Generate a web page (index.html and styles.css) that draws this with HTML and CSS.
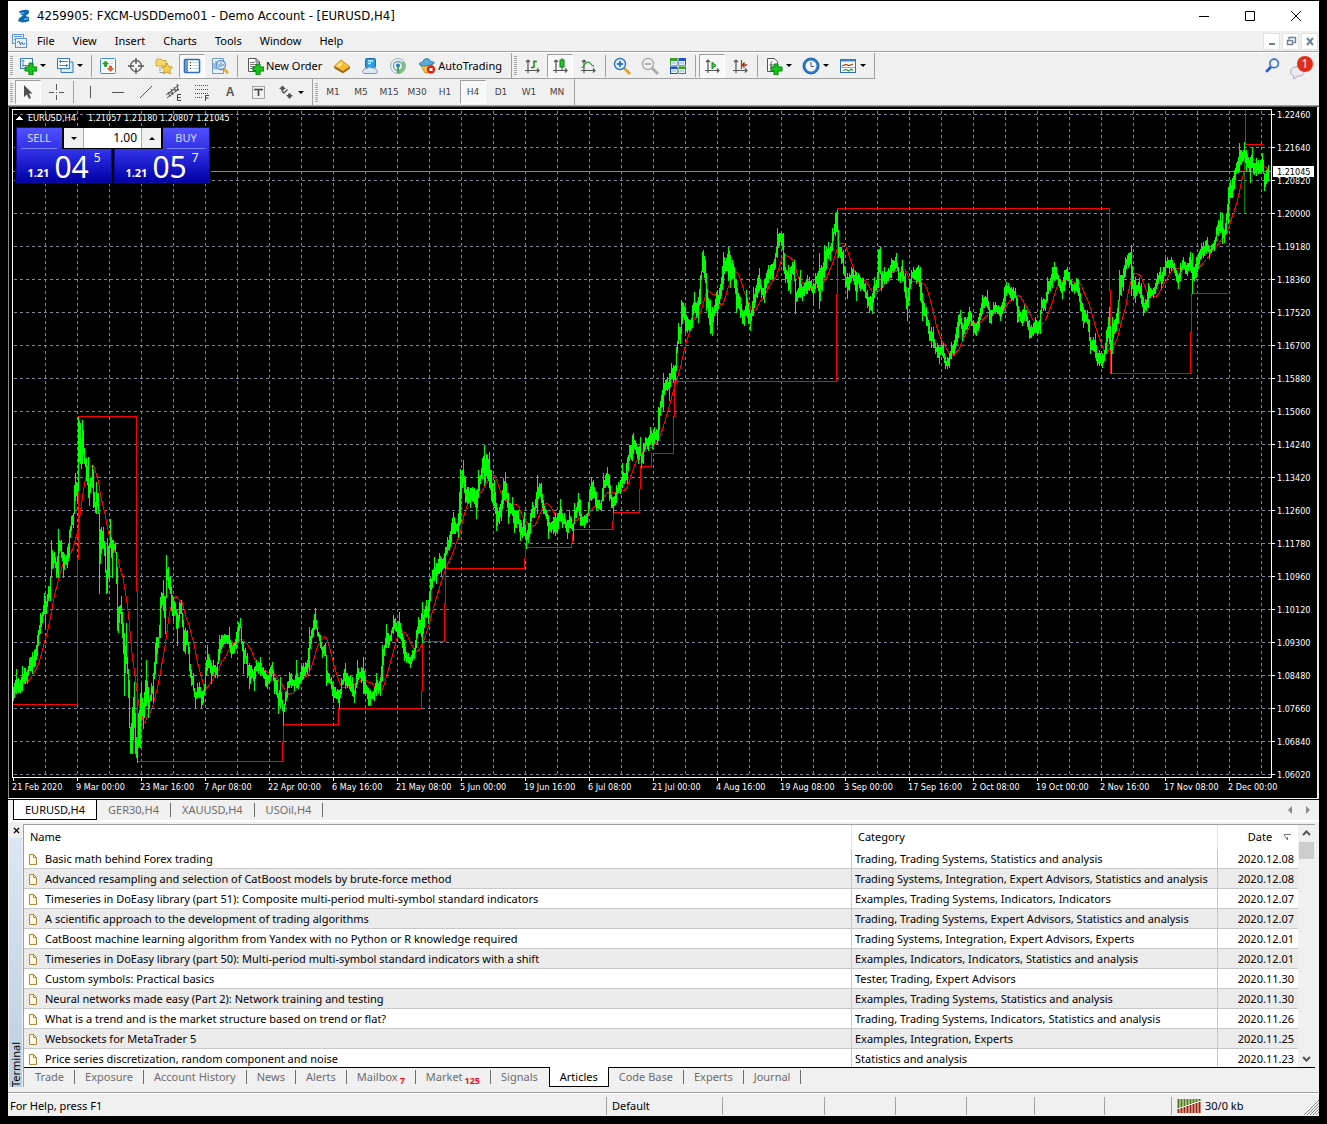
FILE: index.html
```html
<!DOCTYPE html>
<html lang="en">
<head>
<meta charset="utf-8">
<meta name="viewport" content="width=device-width, initial-scale=1">
<title>4259905: FXCM-USDDemo01 - Demo Account - [EURUSD,H4]</title>
<link rel="stylesheet" href="styles.css">
</head>
<body>
<div class="window">
  <header class="titlebar">
    <svg class="app-logo" viewBox="0 0 14 14"><path d="M2 2.500Q6 0 11 1Q13.500 3 10.500 5.500L8.500 7L12 8V12Q7 14.500 2 12.500Q0 11 3 8.500L6 6.500L3 5Z" fill="#0f6ab4"/><path d="M3 4.500L7 4M7 10.500L11 9.500" stroke="#9fd0ee" stroke-width="1"/></svg>
    <h1 class="title">4259905: FXCM-USDDemo01 - Demo Account - [EURUSD,H4]</h1>
    <div class="window-controls">
      <button aria-label="Minimize"><svg viewBox="0 0 12 12"><path d="M1 6.500H11" stroke="#000"/></svg></button>
      <button aria-label="Maximize"><svg viewBox="0 0 12 12"><path d="M1.500 1.500H10.500V10.500H1.500Z" fill="none" stroke="#000"/></svg></button>
      <button aria-label="Close"><svg viewBox="0 0 12 12"><path d="M1 1L11 11M11 1L1 11" stroke="#000"/></svg></button>
    </div>
  </header>

  <nav class="menubar" aria-label="Main menu">
    <svg class="menu-icon" viewBox="0 0 16 16"><rect x=".5" y="1.500" width="11" height="9" fill="#eaf3fc" stroke="#5b94d6"/><path d="M2 3.500H10M2 7L4 5.500L6 7" fill="none" stroke="#5b94d6"/><rect x="3.500" y="5.500" width="11" height="9" fill="#eaf3fc" stroke="#5b94d6"/><path d="M5 10L7 8L8.500 12L10 9L11.500 12L13 10" fill="none" stroke="#3a78c4"/></svg>
    <button>File</button><button>View</button><button>Insert</button><button>Charts</button><button>Tools</button><button>Window</button><button>Help</button>
    <div class="mdi-controls">
      <button aria-label="Minimize chart"><svg viewBox="0 0 12 12"><path d="M3 9H9" stroke="#6f8193" stroke-width="2"/></svg></button>
      <button aria-label="Restore chart"><svg viewBox="0 0 12 12"><path d="M4 4.500V2.500H10.500V7.500H8.500M4 2.500H11" fill="none" stroke="#6f8193" stroke-width="1.500"/><rect x="2.500" y="5.500" width="5" height="4" fill="#fff" stroke="#6f8193" stroke-width="1.500"/></svg></button>
      <button aria-label="Close chart"><svg viewBox="0 0 12 12"><path d="M3 3L9 10M9 3L3 10" stroke="#6f8193" stroke-width="2"/></svg></button>
    </div>
  </nav>

  <div class="toolbars">
    <div class="toolbar-row">
      <div class="tool-group">
        <span class="grip"></span>
        <button class="tool drop" aria-label="New chart"><svg viewBox="0 0 18 18"><rect x="1.500" y="1.500" width="12" height="10" fill="#f5faff" stroke="#3d79b8"/><path d="M4 3V10M2.500 4.500L4 3L5.500 4.500M3 8.500H11" fill="none" stroke="#4f86bf"/><path d="M10 6H14V10H18V14H14V18H10V14H6V10H10Z" fill="#16c51c" stroke="#087d0c"/></svg><i class="caret"></i></button>
        <button class="tool drop" aria-label="Profiles"><svg viewBox="0 0 18 18"><path d="M5 5H17V15.500H5Z" fill="#dcebfb" stroke="#3d79b8"/><rect x="1.500" y="1.500" width="12" height="10" fill="#f5faff" stroke="#3d79b8"/><path d="M3 4.500H12M3 8.500H12M5 3L3.500 4.500L5 6M10 7L11.500 8.500L10 10" fill="none" stroke="#4f86bf"/></svg><i class="caret"></i></button>
        <span class="sep"></span>
        <button class="tool" aria-label="Market Watch"><svg viewBox="0 0 18 18"><rect x="1.500" y="1.500" width="15" height="15" rx="1" fill="#fff" stroke="#3f8fd6"/><path d="M6.500 4L9.500 7H7.500V9.500H5.500V7H3.500Z" fill="#18b21c" stroke="#0b7a0e" stroke-width=".6"/><path d="M11.500 14.500L14.500 11.500H12.500V9H10.500V11.500H8.500Z" fill="#f1602b" stroke="#b83510" stroke-width=".6"/><path d="M11 4.500H14M11 6.500H14M3.500 12.500H6" stroke="#c4d8ec"/></svg></button>
        <button class="tool" aria-label="Data Window"><svg viewBox="0 0 18 18"><circle cx="9" cy="9" r="5.500" fill="none" stroke="#555" stroke-width="1.300"/><path d="M9 1V7M9 11V17M1 9H7M11 9H17" stroke="#555" stroke-width="1.300"/></svg></button>
        <button class="tool" aria-label="Navigator"><svg viewBox="0 0 18 18"><path d="M1 3L2 2H6L7 3.500H11V9H1Z" fill="#f7d86a" stroke="#c29a24" stroke-width=".8"/><path d="M5 11V15.500H9" fill="none" stroke="#555" stroke-dasharray="1 1"/><path d="M12 6L13.700 9.600L17.500 10.200L14.700 12.900L15.500 17L12 15L8.500 17L9.300 12.900L6.500 10.200L10.300 9.600Z" fill="#fbd045" stroke="#b98a18" stroke-width=".8"/></svg></button>
        <button class="tool pressed" aria-label="Terminal"><svg viewBox="0 0 18 18"><rect x="1.500" y="2.500" width="15" height="13" rx="1" fill="#fff" stroke="#2c6fb5" stroke-width="1.600"/><rect x="2" y="3" width="3" height="12" fill="#5c9ad8"/><path d="M7.500 5V14" stroke="#222" stroke-dasharray="1 2"/><path d="M8.500 5.500H15M8.500 8.500H15M8.500 11.500H15" stroke="#c2dcf6"/></svg></button>
        <button class="tool" aria-label="Strategy Tester"><svg viewBox="0 0 18 18"><path d="M1.500 1.500H12.500V16.500H1.500Z" fill="#eaf3fc" stroke="#6c9ccb"/><path d="M3 12V6M5 13V4M11 5V3" stroke="#4f86bf"/><circle cx="10" cy="8" r="4.500" fill="#d4e8fa" fill-opacity=".9" stroke="#5d90bf" stroke-width="1.300"/><path d="M8 10V7M10 10V5.500M12 9V7" stroke="#4f86bf"/><path d="M13 12L17 16" stroke="#e0ac2c" stroke-width="2.600"/></svg></button>
        <span class="sep"></span>
        <button class="tool text-tool"><svg viewBox="0 0 18 18"><path d="M2.500 1.500H10L13.500 5V14.500H2.500Z" fill="#fff" stroke="#555"/><path d="M10 1.500V5H13.500" fill="none" stroke="#555"/><path d="M4 5.500H9M4 7.500H11M4 9.500H9M4 11.500H7" stroke="#777"/><path d="M10 7H14V10H18V14H14V18H10V14H7V10H10Z" fill="#16c51c" stroke="#087d0c"/></svg>New Order</button>
        <button class="tool" aria-label="MetaEditor"><svg viewBox="0 0 18 18"><path d="M1.500 9L8 3L16.500 9.500V11.500L10 16L1.500 11Z" fill="#a56a0c" stroke="#8d5a08" stroke-width=".7"/><path d="M1.500 9L8 3L16.500 9.500L10 14Z" fill="#f3bd3a"/><path d="M3.500 9L8 5L10 6.500L5.500 10.500Z" fill="#fde38f"/></svg></button>
        <button class="tool" aria-label="Virtual Hosting"><svg viewBox="0 0 18 18"><rect x="4.500" y="1.500" width="10" height="9" rx="1" fill="#2b9be3" stroke="#1469ad"/><path d="M7 4H12M7 6.500H10" stroke="#d7f0ff" stroke-width="1.500"/><path d="M3 16.500Q.5 15 2.500 12.500Q4 10.500 6 11.500Q8 8.500 11 11Q15 10 15.500 13Q17.500 15 15.500 16.500Z" fill="#dce6f1" stroke="#8299b3"/></svg></button>
        <button class="tool" aria-label="Signals"><svg viewBox="0 0 18 18"><circle cx="9" cy="9" r="7.500" fill="#e9f2ee" stroke="#98b4c6"/><circle cx="9" cy="9" r="4.500" fill="none" stroke="#6f9fc0" stroke-width="1.300"/><path d="M9 4.500A4.500 4.500 0 0 1 9 13.500V17A8 8 0 0 0 15.500 5Z" fill="#7fc184"/><circle cx="9" cy="8.500" r="2" fill="#2878c8"/><path d="M9 9V16" stroke="#2c9b39" stroke-width="1.600"/></svg></button>
        <button class="tool text-tool"><svg viewBox="0 0 18 18"><path d="M2.500 8L15 7L10 16H7Z" fill="#f3c342" stroke="#b98a18" stroke-width=".8"/><path d="M1 7Q2 5 5 5Q5 1.500 9 1.500Q12 1.500 12.500 4.500Q16 4 16.500 6Q12 9 7 9Q2 9 1 7Z" fill="#58aadb" stroke="#2773a8" stroke-width=".8"/><circle cx="13" cy="12.500" r="4.200" fill="#dc2314"/><rect x="11.500" y="11" width="3" height="3" fill="#fff"/></svg>AutoTrading</button>
      </div>
      <div class="tool-group">
        <span class="grip"></span>
        <button class="tool" aria-label="Bar chart"><svg viewBox="0 0 18 18"><path d="M5 3V16M2 13.500H16M3 5L5 3L7 5M14 11.500L16 13.500L14 15.500" fill="none" stroke="#555" stroke-width="1.200"/><path d="M8 10.500H11M11 3.500V11M11 4.500H14" fill="none" stroke="#138a1b" stroke-width="1.500"/></svg></button>
        <button class="tool pressed" aria-label="Candlesticks"><svg viewBox="0 0 18 18"><path d="M5 3V16M2 13.500H16M3 5L5 3L7 5M14 11.500L16 13.500L14 15.500" fill="none" stroke="#555" stroke-width="1.200"/><path d="M11 1V13" stroke="#0d7614"/><rect x="9" y="3" width="4" height="7" fill="#21cc2b" stroke="#0d7614"/></svg></button>
        <button class="tool" aria-label="Line chart"><svg viewBox="0 0 18 18"><path d="M5 3V16M2 13.500H16M3 5L5 3L7 5M14 11.500L16 13.500L14 15.500" fill="none" stroke="#555" stroke-width="1.200"/><path d="M3 11Q8 3 11 6Q13 9 15 9" fill="none" stroke="#2d9b35" stroke-width="1.300"/></svg></button>
        <span class="sep"></span>
        <button class="tool" aria-label="Zoom in"><svg viewBox="0 0 18 18"><path d="M11 11L17 17" stroke="#d9a528" stroke-width="2.800"/><circle cx="7" cy="7" r="5.500" fill="#dceefc" stroke="#2f76b8" stroke-width="1.400"/><path d="M4 7H10M7 4V10" stroke="#2f76b8" stroke-width="1.800"/></svg></button>
        <button class="tool" aria-label="Zoom out"><svg viewBox="0 0 18 18"><path d="M11 11L17 17" stroke="#aaa" stroke-width="2.800"/><circle cx="7" cy="7" r="5.500" fill="#f2f2f2" stroke="#aaa" stroke-width="1.400"/><path d="M4 7H10" stroke="#aaa" stroke-width="1.800"/></svg></button>
        <button class="tool" aria-label="Tile windows"><svg viewBox="0 0 18 18"><path d="M1 1H9V9H1ZM9 9H17V17H9Z" fill="#3a9b25"/><path d="M9 1H17V9H9ZM1 9H9V17H1Z" fill="#2450c4"/><path d="M2 4H8V8H2ZM10 4H16V8H10ZM2 12H8V16H2ZM10 12H16V16H10Z" fill="#e6f0fb"/><path d="M2.500 6H7M10.500 6H15M2.500 14H7M10.500 14H15" stroke="#8db3d8"/><path d="M1 9H17M9 1V17" stroke="#fff" stroke-width=".8"/></svg></button>
        <span class="sep"></span>
        <button class="tool pressed" aria-label="Auto scroll"><svg viewBox="0 0 18 18"><path d="M5 3V16M2 13.500H16M3 5L5 3L7 5M14 11.500L16 13.500L14 15.500" fill="none" stroke="#555" stroke-width="1.200"/><path d="M9 5L13 8.500L9 12Z" fill="#3cc544" stroke="#138a1b"/></svg></button>
        <button class="tool" aria-label="Chart shift"><svg viewBox="0 0 18 18"><path d="M5 3V16M2 13.500H16M3 5L5 3L7 5M14 11.500L16 13.500L14 15.500" fill="none" stroke="#555" stroke-width="1.200"/><path d="M10.500 3V12" stroke="#555" stroke-width="1.200"/><path d="M11 8H16M13.500 5.500L11.500 8L13.500 10.500" fill="none" stroke="#a83413" stroke-width="1.500"/></svg></button>
        <span class="sep"></span>
        <button class="tool drop" aria-label="Indicators"><svg viewBox="0 0 18 18"><path d="M2.500 1.500H9L12.500 4.500V14.500H2.500Z" fill="#fff" stroke="#555"/><path d="M7.500 4.500Q6 4.500 6 6.500V12M4.500 8H8" fill="none" stroke="#555"/><path d="M9 7H13V10H17V14H13V18H9V14H6V10H9Z" fill="#16c51c" stroke="#087d0c"/></svg><i class="caret"></i></button>
        <button class="tool drop" aria-label="Periods"><svg viewBox="0 0 18 18"><circle cx="9" cy="9" r="6.800" fill="#f4f8fc" stroke="#2a78cc" stroke-width="2.600"/><circle cx="9" cy="9" r="8" fill="none" stroke="#174f94" stroke-width=".8"/><path d="M9 5V9.500H12" fill="none" stroke="#555"/></svg><i class="caret"></i></button>
        <button class="tool drop" aria-label="Templates"><svg viewBox="0 0 18 18"><rect x="1.500" y="2.500" width="15" height="13" fill="#fff" stroke="#2c6fb5"/><rect x="1.500" y="2.500" width="15" height="2" fill="#3d82cc"/><path d="M3 9L7 7.500L10 8.500L14 7" fill="none" stroke="#a83413" stroke-width="1.200"/><path d="M2 10.500H16" stroke="#8db3d8"/><path d="M4 13.500L7 12.500L10 14L12 12L14 13.500" fill="none" stroke="#2d9b35" stroke-width="1.200"/></svg><i class="caret"></i></button>
      </div>
    </div>
    <div class="toolbar-row toolbar-row-small">
      <div class="tool-group">
        <span class="grip"></span>
        <button class="tool pressed" aria-label="Cursor"><svg viewBox="0 0 18 18"><path d="M5 2V14L8 11.500L10 16L12 15L10 10.500H13.500Z" fill="#505050"/></svg></button>
        <button class="tool" aria-label="Crosshair"><svg viewBox="0 0 18 18"><path d="M9.500 1V7M9.500 12V17M2 9.500H7M12 9.500H17" stroke="#555"/><path d="M9 9H10V10H9Z" fill="#555"/></svg></button>
        <span class="sep"></span>
        <button class="tool" aria-label="Vertical line"><svg viewBox="0 0 18 18"><path d="M9.500 3V15" stroke="#555"/></svg></button>
        <button class="tool" aria-label="Horizontal line"><svg viewBox="0 0 18 18"><path d="M3 9.500H15" stroke="#555"/></svg></button>
        <button class="tool" aria-label="Trendline"><svg viewBox="0 0 18 18"><path d="M3 15L15 3" stroke="#555"/></svg></button>
        <button class="tool" aria-label="Equidistant channel"><svg viewBox="0 0 18 18"><path d="M1 12L14 2M2 15L14 6M3 9L5 14M6 6L8 12M9 4L11 9M12 1L13 8M3 10H8M7 7H13" stroke="#555"/><path d="M16 11.500H12.500V17.500H16M12.500 14.500H15.500" fill="none" stroke="#444"/></svg></button>
        <button class="tool" aria-label="Fibonacci retracement"><svg viewBox="0 0 18 18"><path d="M2 2.500H16M2 6.500H16M2 10.500H16M2 14.500H10" stroke="#555" stroke-dasharray="1 1"/><path d="M16 12.500H12.500V18M12.500 15H15.500" fill="none" stroke="#444"/></svg></button>
        <button class="tool glyph" aria-label="Text">A</button>
        <button class="tool" aria-label="Text label"><svg viewBox="0 0 18 18"><path d="M3.500 3.500H15.500V15.500H3.500Z" fill="none" stroke="#555" stroke-dasharray="1 1"/><path d="M6 7.500V6.500H13V7.500M9.500 6V13" fill="none" stroke="#444" stroke-width="1.600"/></svg></button>
        <button class="tool drop" aria-label="Arrows"><svg viewBox="0 0 18 18"><path d="M2 6L5.500 2.500L9 6H7V7.500H4V6Z" fill="#555"/><path d="M9 12L12.500 16L16 12H14V10.500H11V12ZM4.500 8.500L7 11L11 7L10 6L7 9L5.500 7.500Z" fill="#555"/></svg><i class="caret"></i></button>
      </div>
      <div class="tool-group periods">
        <span class="grip"></span>
        <button class="tool">M1</button><button class="tool">M5</button><button class="tool">M15</button><button class="tool">M30</button><button class="tool">H1</button><button class="tool pressed">H4</button><button class="tool">D1</button><button class="tool">W1</button><button class="tool">MN</button>
      </div>
    </div>
    <div class="toolbar-end">
      <button class="plain" aria-label="Search"><svg viewBox="0 0 16 16"><path d="M6.500 9.500L2 14" stroke="#2b59c3" stroke-width="2.600"/><circle cx="9.500" cy="6" r="4" fill="#eef5ff" stroke="#3a6bd0" stroke-width="1.500"/></svg></button>
      <button class="plain chat" aria-label="Messages"><svg viewBox="0 0 18 18"><path d="M2 8Q3 4 9 4Q16 4 16 9Q16 14 9 14L5 17V13.500Q1 12 2 8Z" fill="#eceaf0" stroke="#a6a3ad"/></svg><span class="badge">1</span></button>
    </div>
  </div>

  <main class="chart-panel">
    <svg class="chart" viewBox="8 107 1311 691" role="img" aria-label="EURUSD H4 price chart">
      <path class="frame" d="M1272 109.500H12.500V777.500H1272M1271.500 109V778"/>
      <g id="grid" class="grid"></g>
      <path class="bid" d="M13 171.500H1271"/>
      <path class="marker" d="M1245.500 110V144M1244.500 144V213"/>
      <path id="average" class="average"/>
      <path class="levels" d="M13 704.500H77.500V560L78.500 559V416.500H136.500V590L137.500 591V761.500H282.500V742L283.500 741V724.500H338.500V708.500H421.500L422.500 674V641.500H444.500V604L445.500 603V568.500H524.500L525.500 547.500H571.500L573.500 529.500H612.500L613.500 512.500H639.500L640.500 466.500H651.500V453.500H673.500V417L674.500 416V381.500H836.500V295L837.500 294V208.500H1109.500V290L1110.500 291V373.500H1190.500V333L1191.500 332V293.500H1227M1245 144.500H1263"/>
      <path id="prices" class="prices"/>
      <g id="labels" class="labels"></g>
      <path d="M16 120H23L19.500 116Z" fill="#fff"/>
      <rect x="1273" y="166" width="41" height="11" fill="#fff"/>
      <text class="current" x="1277" y="175">1.21045</text>
      <text class="labels" x="28" y="121">EURUSD,H4</text>
      <text class="labels" x="88" y="121">1.21057 1.21180 1.20807 1.21045</text>
    </svg>
    <div class="one-click">
      <button class="trade"><span class="side">SELL</span><span class="quote"><b>1.21</b><span class="pips">04</span><sup>5</sup></span></button>
      <button class="trade buy"><span class="side">BUY</span><span class="quote"><b>1.21</b><span class="pips">05</span><sup>7</sup></span></button>
      <div class="volume">
        <button aria-label="Decrease volume"><i class="caret"></i></button>
        <input type="text" value="1.00" aria-label="Volume">
        <button aria-label="Increase volume"><i class="caret up"></i></button>
      </div>
    </div>
  </main>

  <div class="chart-tabs" role="tablist">
    <button class="tab active">EURUSD,H4</button><button class="tab">GER30,H4</button><button class="tab">XAUUSD,H4</button><button class="tab">USOil,H4</button>
    <div class="tab-scroll"><button class="plain" aria-label="Scroll left"><i class="tri left"></i></button><button class="plain" aria-label="Scroll right"><i class="tri right"></i></button></div>
  </div>

  <section class="terminal">
    <div class="terminal-side">
      <button class="plain" aria-label="Close terminal"><svg viewBox="0 0 8 8"><path d="M1 1L7 7M7 1L1 7" stroke="#000" stroke-width="1.600"/></svg></button>
      <div class="terminal-name"><span>Terminal</span></div>
    </div>
    <div class="terminal-body">
      <div class="list">
        <table class="articles">
          <colgroup><col><col class="col-category"><col class="col-date"></colgroup>
          <thead><tr><th>Name</th><th>Category</th><th class="date">Date <svg class="sort" viewBox="0 0 9 8"><path d="M1 1.500H8M1 1.500L4.500 7V4" fill="none" stroke="#777"/></svg></th></tr></thead>
          <tbody id="articles">
            <tr><td>Basic math behind Forex trading</td><td>Trading, Trading Systems, Statistics and analysis</td><td>2020.12.08</td></tr>
            <tr><td>Advanced resampling and selection of CatBoost models by brute-force method</td><td>Trading Systems, Integration, Expert Advisors, Statistics and analysis</td><td>2020.12.08</td></tr>
            <tr><td>Timeseries in DoEasy library (part 51): Composite multi-period multi-symbol standard indicators</td><td>Examples, Trading Systems, Indicators, Indicators</td><td>2020.12.07</td></tr>
            <tr><td>A scientific approach to the development of trading algorithms</td><td>Trading, Trading Systems, Expert Advisors, Statistics and analysis</td><td>2020.12.07</td></tr>
            <tr><td>CatBoost machine learning algorithm from Yandex with no Python or R knowledge required</td><td>Trading Systems, Integration, Expert Advisors, Experts</td><td>2020.12.01</td></tr>
            <tr><td>Timeseries in DoEasy library (part 50): Multi-period multi-symbol standard indicators with a shift</td><td>Examples, Indicators, Indicators, Statistics and analysis</td><td>2020.12.01</td></tr>
            <tr><td>Custom symbols: Practical basics</td><td>Tester, Trading, Expert Advisors</td><td>2020.11.30</td></tr>
            <tr><td>Neural networks made easy (Part 2): Network training and testing</td><td>Examples, Trading Systems, Statistics and analysis</td><td>2020.11.30</td></tr>
            <tr><td>What is a trend and is the market structure based on trend or flat?</td><td>Trading, Trading Systems, Indicators, Statistics and analysis</td><td>2020.11.26</td></tr>
            <tr><td>Websockets for MetaTrader 5</td><td>Examples, Integration, Experts</td><td>2020.11.25</td></tr>
            <tr><td>Price series discretization, random component and noise</td><td>Statistics and analysis</td><td>2020.11.23</td></tr>
          </tbody>
        </table>
        <div class="scrollbar">
          <button class="plain" aria-label="Scroll up"><svg viewBox="0 0 9 9"><path d="M1 6L4.500 2.500L8 6" fill="none" stroke="#555" stroke-width="2"/></svg></button>
          <div class="thumb"></div>
          <button class="plain" aria-label="Scroll down"><svg viewBox="0 0 9 9"><path d="M1 3L4.500 6.500L8 3" fill="none" stroke="#555" stroke-width="2"/></svg></button>
        </div>
      </div>
      <div class="bottom-tabs" role="tablist">
        <button class="tab">Trade</button><button class="tab">Exposure</button><button class="tab">Account History</button><button class="tab">News</button><button class="tab">Alerts</button><button class="tab">Mailbox<sub>7</sub></button><button class="tab">Market<sub>125</sub></button><button class="tab before">Signals</button><button class="tab active">Articles</button><button class="tab">Code Base</button><button class="tab">Experts</button><button class="tab">Journal</button>
      </div>
    </div>
  </section>

  <footer class="statusbar">
    <span>For Help, press F1</span><span>Default</span><span></span><span></span><span></span><span></span><span></span><span></span>
    <span class="traffic"><svg viewBox="0 0 24 14"><path d="M1.500 0V9M4.500 0V8M7.500 0V7M10.500 0V6M13.500 0V5M16.500 0V4M19.500 0V3M22.500 0V2" stroke="#4c7a12" stroke-width="2"/><path d="M1.500 10V14M4.500 9V14M7.500 8V14M10.500 7V14M13.500 6V14M16.500 5V14M19.500 4V14M22.500 3V14" stroke="#a0220c" stroke-width="2"/></svg>30/0 kb
    <svg class="resize" viewBox="0 0 16 16"><path d="M1 16L16 1M4 16L16 4M7 16L16 7M10 16L16 10M13 16L16 13" stroke="#8a8a8a"/></svg></span>
  </footer>
</div>
<script src="chart.js"></script>
</body>
</html>
```
FILE: styles.css
```css
* { box-sizing: border-box; }

body {
  margin: 0;
  padding: 1px 8px 8px;
  min-height: 100vh;
  background: #000;
  color: #000;
  font: 11px/16px "Noto Sans", "Open Sans", sans-serif;
}

button, input { margin: 0; padding: 0; border: 0; background: none; color: inherit; font: inherit; }
svg { display: block; }
.window { background: #f0f0f0; }
.plain { display: flex; align-items: center; justify-content: center; }

/* Title and menu */
.titlebar { display: flex; align-items: center; height: 30px; padding-left: 9px; background: #fff; }
.app-logo { width: 14px; height: 14px; }
.title { margin: 0 auto 0 6px; font: 13px/20px "DejaVu Sans Condensed", "DejaVu Sans", sans-serif; }
.window-controls { display: flex; }
.window-controls button { display: grid; place-items: center; width: 46px; height: 30px; }
.window-controls svg { width: 12px; height: 12px; }

.menubar { display: flex; align-items: center; height: 21px; padding-left: 4px; border-bottom: 1px solid #a0a0a0; }
.menu-icon { width: 16px; height: 16px; }
.menubar > button { padding: 0 9px; }
.mdi-controls { display: flex; gap: 2px; margin-left: auto; padding-right: 1px; }
.mdi-controls button { display: grid; place-items: center; width: 17px; height: 17px; border: 1px solid #e2e2e2; background: #fff; }
.mdi-controls svg { width: 12px; height: 12px; }

/* Toolbars */
.toolbars { display: grid; grid-template-columns: 1fr auto; border-top: 1px solid #fff; border-bottom: 1px solid #a0a0a0; }
.toolbar-row { display: flex; grid-column: 1; height: 26px; }
.tool-group { display: flex; align-items: center; padding-right: 3px; border-right: 1px solid #a0a0a0; border-bottom: 1px solid #a0a0a0; }
.toolbar-row-small .tool-group { border-bottom: 0; }
.grip { width: 3px; height: 19px; margin: 0 1px 0 2px; background: repeating-linear-gradient(#a6a6a6 0 1px, transparent 1px 2px); }
.tool { display: flex; flex: none; align-items: center; justify-content: center; width: 28px; height: 24px; }
.tool svg { flex: none; width: 18px; height: 18px; }
.drop { justify-content: flex-start; gap: 3px; width: 37px; padding-left: 5px; }
.text-tool { gap: 2px; width: auto; padding: 0 6px; }
.pressed { width: 26px; margin: 0 1px; border: 1px solid; border-color: #a0a0a0 #fff #fff #a0a0a0; background: #f8f8f8; }
.sep { width: 6px; height: 22px; background: linear-gradient(#a0a0a0, #a0a0a0) 3px 0 / 1px 100% no-repeat; }
.caret { border: 3px solid transparent; border-top-color: #000; border-bottom: 0; }
.caret.up { border-top: 0; border-bottom: 3px solid #000; }
.glyph { color: #555; font: bold 12px/16px "Liberation Sans", sans-serif; }
.periods .tool { color: #444; font: 9px/16px "DejaVu Sans", sans-serif; }
.toolbar-end { display: flex; grid-column: 2; grid-row: 1 / 3; align-items: flex-start; gap: 8px; padding: 4px 6px 0 0; }
.toolbar-end svg { width: 17px; height: 17px; }
.chat { position: relative; width: 24px; height: 24px; padding-top: 4px; justify-content: flex-start; }
.badge { position: absolute; top: -1px; right: 0; width: 16px; height: 16px; border-radius: 8px; background: #df2f1b; color: #fff; font-size: 12px; text-align: center; }

/* Price chart */
.chart-panel { position: relative; border-top: 1px solid #5a5a5a; border-bottom: 1px solid #fff; background: #000; box-shadow: inset 1px 0 #8c8c8c, inset -2px 0 #e8e8e8; }
.chart { width: 100%; height: auto; }
.chart path { shape-rendering: crispEdges; }
.frame { fill: none; stroke: #fff; }
.grid { fill: none; stroke: #778899; stroke-dasharray: 3 3; }
.bid { stroke: #778899; }
.marker { fill: none; stroke: #008000; }
.average, .levels { fill: none; stroke: #f00; }
.prices { fill: none; stroke: #0f0; }
.labels, .current { fill: #fff; font: 9px "DejaVu Sans Condensed", "DejaVu Sans", sans-serif; }
.current { fill: #000; }
.labels path { fill: none; stroke: #fff; }

.one-click { position: absolute; top: 20px; left: 8px; display: flex; gap: 2px; outline: 1px solid #000; background: #000; }
.trade { display: flex; flex-direction: column; justify-content: space-between; width: 96px; height: 56px; padding: 1px 4px; border: 1px solid #0a0aa8; background: linear-gradient(#5050ff, #2a2ae0 50%, #0000a4); color: #fff; }
.side { width: 36px; height: 20px; border-bottom: 1px solid #7e7eff; color: #d8dcff; line-height: 18px; text-align: center; }
.buy .side { align-self: flex-end; width: 38px; }
.quote { display: flex; align-items: flex-end; align-self: center; height: 30px; gap: 5px; line-height: 17px; }
.pips { font-size: 30px; line-height: 29px; }
.quote sup { align-self: flex-start; font-size: 12px; line-height: 14px; vertical-align: baseline; }
.volume { position: absolute; top: 0; left: 46px; display: flex; width: 101px; height: 22px; padding: 1px 2px; background: #000; }
.volume button { display: grid; place-items: center; flex: none; width: 19px; background: #f0f0f0; }
.volume input { width: 59px; padding-right: 4px; border: solid #aaa; border-width: 0 1px; background: #fff; font-size: 12px; text-align: right; }

/* Tab strips */
.tab { height: 14px; padding: 0 10px; border-right: 1px solid #6d6d6d; color: #6d6d6d; line-height: 14px; white-space: nowrap; }
.tab.active { height: 20px; border: 1px solid #000; border-top: 0; background: #fff; color: #000; line-height: 18px; }
.tab sub { margin-left: 2px; color: #e81123; font: bold 9px/8px "Noto Sans", sans-serif; }
.chart-tabs { display: flex; align-items: center; height: 23px; padding-left: 5px; border-top: 1px solid #000; border-bottom: 2px solid #fff; }
.chart-tabs .tab { padding: 0 11px; }
.tab-scroll { display: flex; gap: 14px; margin-left: auto; padding-right: 9px; }
.tri { border: 4px solid transparent; }
.tri.left { border-right-color: #888; border-left: 0; }
.tri.right { border-left-color: #888; border-right: 0; }

/* Terminal */
.terminal { display: flex; padding: 2px 4px 5px 1px; border-bottom: 1px solid #a0a0a0; }
.terminal-side { display: flex; flex: none; flex-direction: column; width: 14px; }
.terminal-side button { height: 12px; }
.terminal-side svg { width: 7px; height: 7px; }
.terminal-name { flex: 1; display: flex; align-items: flex-end; margin: 2px 1px 0 0; background: linear-gradient(#dbe7f4, #bccfe0); }
.terminal-name span { writing-mode: vertical-rl; transform: rotate(180deg); width: 13px; line-height: 13px; }
.terminal-body { flex: 1; min-width: 0; border-top: 1px solid #a0a0a0; border-left: 1px solid #a0a0a0; }
.list { display: flex; height: 242px; overflow: hidden; background: #fff; }
.articles { flex: 1; width: 100%; height: max-content; border-collapse: separate; border-spacing: 0; table-layout: fixed; }
.col-category { width: 366px; }
.col-date { width: 80px; }
.articles th, .articles td { overflow: hidden; padding: 0 3px; border-right: 1px solid #c8c8c8; text-align: left; font-weight: 400; white-space: nowrap; }
.articles th { height: 24px; padding: 0 6px; border-color: #e5e5e5; }
.articles td { height: 20px; padding-top: 1px; border-bottom: 1px solid #c8c8c8; line-height: 18px; }
.articles td:last-child, .articles th.date { border-right: 0; text-align: right; }
.articles td:last-child { padding-right: 4px; }
.sort { display: inline-block; width: 9px; height: 8px; margin-left: 8px; }
.articles tr:nth-child(even) td { background: #ebebeb; }
.file-icon { display: inline-block; width: 10px; height: 11px; margin: 0 7px 0 1px; vertical-align: -2px; }
.scrollbar { display: flex; flex: none; flex-direction: column; width: 17px; background: #f0f0f0; }
.scrollbar button { height: 17px; }
.scrollbar svg { width: 9px; height: 9px; }
.thumb { height: 17px; margin: 0 1px auto; background: #cdcdcd; }
.bottom-tabs { display: flex; align-items: center; height: 20px; padding-left: 1px; background: linear-gradient(#000, #000) top / 100% 1px no-repeat; }
.bottom-tabs .before { border-right-color: transparent; }

/* Status bar */
.statusbar { display: grid; grid-template-columns: 1fr 116px 102px 71px 71px 68px 70px 67px 148px; align-items: center; height: 23px; padding-top: 2px; border-top: 1px solid #fff; }
.statusbar > span { height: 18px; padding-left: 5px; border-left: 1px solid #a0a0a0; line-height: 18px; }
.statusbar > span:first-child { padding-left: 2px; border-left: 0; }
.statusbar .traffic { display: flex; align-items: center; gap: 4px; }
.traffic svg { width: 24px; height: 14px; }
.traffic .resize { align-self: flex-end; width: 16px; height: 16px; margin-left: auto; }
```
FILE: chart.js
```js
const NS = 'http://www.w3.org/2000/svg';
const add = (parent, name, attrs, text) => {
  const el = document.createElementNS(NS, name);
  for (const key in attrs) el.setAttribute(key, attrs[key]);
  if (text) el.textContent = text;
  parent.append(el);
};

// Price swings, as "x,high,low" in thirds of a unit from each block's origin.
const blocks = [
  [0, 380, '40,920,960 47,868,940 54,895,935 60,900,935 66,858,930 74,865,910 80,870,910 88,835,870 97,815,880 105,808,855 112,765,825 119,698,760 125,697,725 131,640,700 136,648,745 143,617,660 149,590,660 154,481,590 158,520,560 163,515,545 168,545,590 173,448,590 178,480,515 184,480,530 190,515,590 196,530,550 202,500,560 208,450,530 214,408,450 219,400,440 223,315,400 226,278,360 230,310,360 234,110,330 239,130,250 242,175,265 245,120,250 249,150,220 253,205,250 259,235,300 263,230,350 267,310,375 271,295,335 275,255,320 280,270,380 285,365,395 289,305,400 293,340,400 298,400,640 303,440,520 308,440,500 314,490,575 318,570,640 322,475,635 327,490,600 331,418,500 335,480,590 340,480,515 346,485,515 350,560,750 354,680,755 359,675,700 364,648,730 368,730,820 373,760,945 378,730,850 382,830,880 387,900,1040 391,1040,1120 396,980,1120 401,905,1040 406,1000,1120 410,1080,1145 415,1000,1100 420,940,1100 424,910,1020 428,970,1045 433,935,1010 438,840,975 443,920,1010 448,960,985 453,910,960 459,880,965 465,790,880 469,770,850 474,770,800 479,650,770 483,635,680 488,600,690 494,650,760 499,525,620 504,560,620 510,590,640 514,620,690 519,650,720 525,670,700 530,700,795 536,665,720 542,660,700 548,720,810 555,745,820 561,750,790 568,800,870 573,870,915 579,880,930 585,935,980 590,910,950 597,905,950 603,935,985 609,930,965 615,860,930 621,795,870 627,830,860 633,850,910 640,840,880 646,855,890 652,845,890 658,765,840 664,765,805 672,763,790 680,765,790 687,740,800 694,790,830 701,790,815 708,755,805 713,725,780 719,715,740 724,740,790 730,785,880 736,805,830 742,820,890 748,850,925 753,855,895 761,860,930 767,840,870 774,845,880 781,830,885 788,860,890 795,870,915 802,885,925 809,860,900 817,845,880 823,890,940 830,900,950 835,940,1000 839,890,980 845,960,990 850,980,1035 855,935,970 861,905,950 867,875,920 874,880,920 881,900,930 888,840,920 895,890,925 902,855,900 909,850,895 916,845,885 922,840,880 927,740,870 933,750,790 940,720,765 946,683,740 952,740,765 960,765,800 967,800,830 974,790,825 979,840,915 985,880,905 992,890,925 998,915,965 1006,920,950 1013,930,965'],
  [320, 400, '56,870,925 62,835,880 68,820,850 75,790,865 82,820,860 89,825,870 95,830,885 101,870,905 106,850,880 112,780,850 118,815,830 124,800,845 130,770,880 137,855,880 143,865,915 149,870,915 155,875,895 162,860,900 167,820,885 174,850,880 181,830,885 185,735,840 192,735,765 198,672,740 205,700,740 212,690,720 219,645,700 226,655,690 231,680,705 236,635,710 241,670,715 247,700,740 252,720,780 258,755,785 264,760,785 269,770,800 275,750,780 281,745,775 287,690,740 294,650,700 300,660,695 307,605,725 313,630,680 319,600,650 325,600,670 329,530,600 336,510,560 343,470,540 349,490,550 356,460,520 363,475,525 370,475,500 375,440,505 381,410,455 388,405,450 394,370,425 400,335,400 406,365,400 413,340,410 419,208,370 425,210,260 430,180,250 436,230,305 442,260,310 449,265,320 456,262,300 463,265,310 467,270,355 473,210,290 480,225,250 487,175,235 493,135,255 500,165,235 507,155,260 512,210,300 518,280,315 523,240,320 529,310,390 536,320,370 543,300,360 549,235,310 556,215,300 563,280,370 570,310,340 575,290,345 581,330,395 588,330,380 594,330,370 600,360,420 607,380,410 613,335,405 619,400,445 625,370,425 631,340,400 637,305,350 643,320,350 650,225,340 657,250,285 664,250,305 670,300,340 677,330,355 685,345,415 692,365,395 699,350,400 706,340,405 713,340,385 721,298,360 727,340,380 733,340,370 740,360,415 747,330,380 753,355,385 758,370,420 761,310,370 767,320,350 773,280,330 779,300,375 785,350,375 793,345,380 800,340,365 807,270,320 813,230,300 820,240,290 828,275,330 835,300,325 843,300,330 850,220,300 856,225,260 861,200,255 867,225,300 874,285,320 880,290,335 887,255,305 894,245,275 900,240,280 906,190,260 913,220,250 920,170,250 928,135,180 935,105,180 940,100,160 947,130,160 954,140,190 959,110,165 964,165,200 970,130,190 976,110,145 983,110,150 989,80,130 995,100,145 1002,80,130 1010,90,130 1014,20,120'],
  [640, 200, '62,585,620 68,520,630 74,540,570 80,530,570 87,520,600 92,490,535 98,495,545 104,495,540 109,440,510 115,370,430 120,380,430 124,300,400 130,310,350 136,320,400 142,350,395 149,360,390 155,315,380 163,275,330 169,310,350 175,290,365 180,225,310 186,155,210 190,150,215 194,180,245 198,220,330 204,295,350 210,300,400 215,320,405 221,315,345 227,275,330 231,270,375 237,265,310 244,230,285 250,155,250 257,175,210 263,140,240 269,165,260 275,180,235 281,200,260 287,240,335 294,280,320 300,290,350 307,330,370 313,330,375 319,270,345 325,310,370 331,340,390 338,260,345 345,265,305 351,235,290 357,205,270 364,255,290 371,240,305 377,220,260 384,195,245 391,195,235 398,185,235 405,160,200 411,85,170 417,100,135 424,95,130 430,100,210 436,200,245 443,195,270 449,200,280 455,185,220 461,180,240 465,250,340 472,270,300 479,210,290 486,260,300 493,250,285 500,225,280 507,230,270 514,240,270 519,250,315 526,220,265 532,220,260 538,160,325 545,200,270 551,135,230 557,140,205 563,125,175 569,140,180 575,85,150 580,95,120 585,40,105 590,30,90 595,120,170 602,140,190 608,150,220 614,200,260 620,220,295 626,220,270 633,200,240 640,205,240 647,215,300 653,220,250 660,230,270 668,235,270 675,250,290 682,270,320 688,290,335 695,280,340 702,230,290 708,240,270 715,150,260 719,140,220 724,220,270 731,200,250 738,215,250 745,205,240 752,175,230 760,180,215 767,160,200 773,200,240 780,215,245 787,180,240 794,220,290 800,290,360 806,240,300 813,210,250 820,200,235 827,205,250 834,195,240 839,200,300 845,280,360 852,310,345 859,320,375 866,370,420 873,380,440 878,380,440 884,430,460 891,430,470 897,440,490 903,420,460 910,430,470 916,470,505 922,470,505 928,460,500 934,425,475 941,420,460 948,380,435 953,345,410 960,330,370 967,370,420 973,350,400 980,350,385 986,320,370 993,340,375 1000,360,400 1007,370,405 1014,350,390'],
  [960, 120, '58,580,620 65,525,580 72,530,560 80,510,560 86,560,605 92,570,610 99,545,580 106,545,580 113,555,580 119,560,600 126,545,580 132,500,560 138,485,525 145,490,515 152,500,540 158,500,540 165,505,530 172,535,605 179,575,600 186,570,615 192,555,600 199,570,600 206,600,655 213,615,650 220,610,645 226,590,635 233,605,640 239,570,640 244,530,580 250,535,570 256,540,570 262,470,540 269,475,510 275,440,500 281,425,480 287,440,475 294,465,495 300,480,510 307,485,535 313,450,510 320,440,480 327,455,500 334,480,510 341,490,520 348,475,510 354,480,525 361,520,570 368,560,620 375,570,600 382,570,610 387,600,660 391,650,700 398,650,690 405,640,710 412,700,735 418,690,735 425,700,740 432,690,720 438,630,700 444,590,650 448,560,670 452,660,760 456,590,700 462,600,640 468,580,630 473,540,610 477,450,530 483,465,525 490,445,510 496,410,465 503,400,440 509,395,430 514,375,525 519,460,525 526,470,545 531,495,520 538,475,520 544,490,550 550,530,585 557,540,570 564,490,560 571,505,530 578,505,530 585,490,520 592,460,495 599,440,480 603,465,505 610,440,480 616,415,460 620,410,440 627,420,455 634,410,450 641,430,455 648,450,480 655,465,505 661,430,480 668,410,440 675,425,460 682,430,465 689,395,450 695,400,520 701,440,480 708,410,470 714,400,445 722,370,415 730,365,410 737,360,400 742,350,390 747,380,415 754,375,395 762,360,390 769,320,360 775,300,345 781,275,335 786,280,370 792,330,365 797,280,340 803,200,310 809,180,230 815,175,230 821,150,205 827,130,160 833,110,155 838,70,150 843,90,130 848,90,120 853,67,110 858,90,150 864,110,140 870,110,185 875,80,140 880,130,160 887,115,165 893,120,160 900,120,160 905,100,150 909,120,160 912,160,210 918,150,190 925,135,180 928,135,180']
];
const points = blocks.flatMap(([ox, oy, data]) => data.split(' ').map(item => {
  const [x, high, low] = item.split(',').map(Number);
  return [Math.round(ox + x / 3), oy + high / 3, oy + low / 3];
}));

// One vertical bar per column; bars between two swings are shortened a little,
// and each bar reaches at least to the one before it.
const bars = [];
let seed = 7;
const random = () => (seed = (seed * 16807) % 2147483647) / 2147483647;
for (let i = 0; i < points.length - 1; i++) {
  const [x0, h0, l0] = points[i];
  const [x1, h1, l1] = points[i + 1];
  for (let x = x0; x < x1; x++) {
    const t = (x - x0) / (x1 - x0);
    const high = h0 + (h1 - h0) * t;
    const low = l0 + (l1 - l0) * t;
    const cut = x === x0 ? 0 : (low - high) * 0.35;
    let top = Math.round(high + cut * random());
    let bottom = Math.round(low - cut * random());
    const last = bars[bars.length - 1];
    if (last) {
      top = Math.min(top, last[2]);
      bottom = Math.max(bottom, last[1]);
    }
    bars.push([x, top, bottom, (high + low) / 2]);
  }
}
document.getElementById('prices').setAttribute('d', bars.map(([x, high, low]) => `M${x}.5 ${high}V${low + 1}`).join(''));

const span = 16;
document.getElementById('average').setAttribute('d', bars.map(([x], i) => {
  const part = bars.slice(Math.max(0, i - span + 1), i + 1);
  const mean = part.reduce((sum, bar) => sum + bar[3], 0) / part.length;
  return `${i ? 'L' : 'M'}${x}.5 ${mean.toFixed(1)}`;
}).join(''));

const grid = document.getElementById('grid');
const labels = document.getElementById('labels');
const prices = ['1.22460', '1.21640', '1.20820', '1.20000', '1.19180', '1.18360', '1.17520', '1.16700', '1.15880', '1.15060', '1.14240', '1.13420', '1.12600', '1.11780', '1.10960', '1.10120', '1.09300', '1.08480', '1.07660', '1.06840', '1.06020'];
prices.forEach((price, i) => {
  const y = 114 + 33 * i;
  add(grid, 'path', { d: `M14 ${y}.5H1271` });
  add(labels, 'path', { d: `M1272 ${y}.5H1275` });
  add(labels, 'text', { x: 1277, y: y + 4 }, price);
});
for (let x = 45; x < 1271; x += 32) add(grid, 'path', { d: `M${x}.5 111V777` });
const times = ['21 Feb 2020', '9 Mar 00:00', '23 Mar 16:00', '7 Apr 08:00', '22 Apr 00:00', '6 May 16:00', '21 May 08:00', '5 Jun 00:00', '19 Jun 16:00', '6 Jul 08:00', '21 Jul 00:00', '4 Aug 16:00', '19 Aug 08:00', '3 Sep 00:00', '17 Sep 16:00', '2 Oct 08:00', '19 Oct 00:00', '2 Nov 16:00', '17 Nov 08:00', '2 Dec 00:00'];
times.forEach((time, i) => {
  const x = 13 + 64 * i;
  add(labels, 'path', { d: `M${x}.5 778V781` });
  add(labels, 'text', { x: x - 1, y: 790 }, time);
});

for (const cell of document.querySelectorAll('#articles td:first-child')) {
  const icon = document.createElementNS(NS, 'svg');
  icon.setAttribute('viewBox', '0 0 10 11');
  icon.setAttribute('class', 'file-icon');
  add(icon, 'path', { d: 'M1.5 .5H5.500L8.500 3.500V10.500H1.500Z', fill: '#fff8dc', stroke: '#a58a42' });
  add(icon, 'path', { d: 'M5.500 .5V3.500H8.500', fill: 'none', stroke: '#a58a42' });
  cell.prepend(icon);
}
```
